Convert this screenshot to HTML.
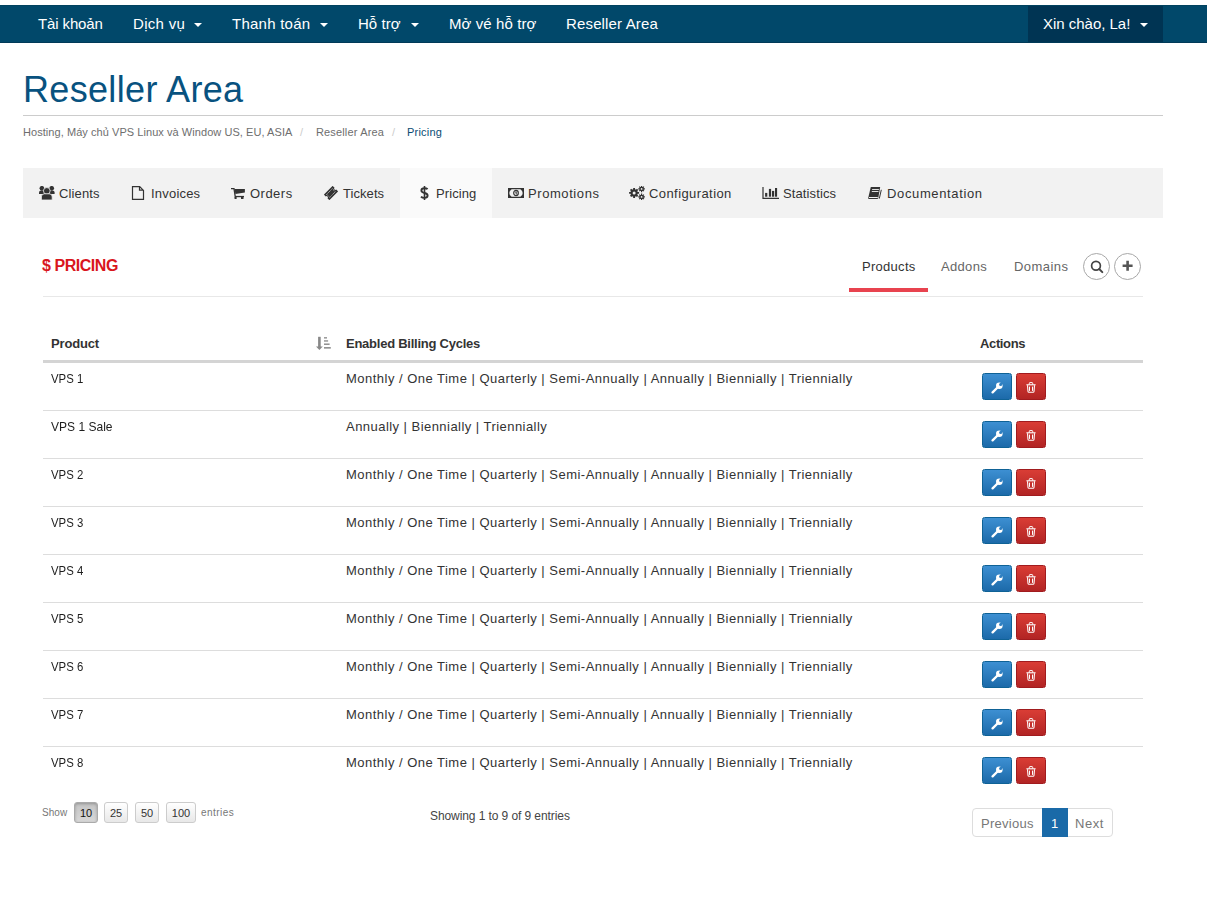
<!DOCTYPE html>
<html><head><meta charset="utf-8">
<style>
*{box-sizing:border-box;margin:0;padding:0}
html,body{width:1207px;height:901px;overflow:hidden;background:#fff;font-family:"Liberation Sans",sans-serif;color:#333}
.a{position:absolute;white-space:nowrap}
#nav{position:absolute;left:0;top:5px;width:1207px;height:38px;background:#01486a;border-top:1px solid #01425f;border-bottom:1px solid #013a58}
.nv{font-size:15px;line-height:18px;color:#fff}
.caret{position:absolute;top:17px;width:0;height:0;border-left:4px solid transparent;border-right:4px solid transparent;border-top:4px solid #fff}
#user{position:absolute;left:1028px;top:0;width:135px;height:36px;background:#003453}
.h1{font-size:36px;color:#08527f;line-height:42px}
.bc{font-size:11px;color:#6e6e6e;line-height:14px}
#tabs{position:absolute;left:23px;top:168px;width:1140px;height:50px;background:#f2f2f2}
.act{position:absolute;left:400px;top:168px;width:92px;height:50px;background:#fafafa}
.tt{font-size:13px;line-height:16px;color:#333}
.ti{position:absolute;line-height:0}
.ph{font-size:16px;font-weight:bold;color:#d9161d;line-height:20px}
.pn{font-size:13px;line-height:16px;color:#666}
.circ{position:absolute;top:253px;width:27px;height:27px;border:1px solid #a8a8a8;border-radius:50%;background:#fff}
.th{font-size:13px;font-weight:bold;line-height:16px;color:#333}
.td{font-size:13px;line-height:16px;color:#333}
.ln{position:absolute;left:43px;width:1100px;height:1px;background:#ddd}
.b1,.b2{position:absolute;width:30px;height:27px;border-radius:2.5px;display:flex;align-items:center;justify-content:center}
.b1{left:982px;background:linear-gradient(#3d8fd2,#1c6aa9);border:1px solid #0f6296}
.b2{left:1016px;background:linear-gradient(#d93d35,#b22424);border:1px solid #a11b1e}
.ft{font-size:10px;color:#777;line-height:14px}
.lb{position:absolute;top:802px;height:21px;border:1px solid #ccc;border-radius:3px;background:linear-gradient(#fff,#e8e8e8);font-size:11px;line-height:20px;text-align:center;color:#333}
.pg{position:absolute;top:808px;height:29px;border:1px solid #ddd;background:#fff}
.pt{font-size:13px;line-height:16px;color:#777}
</style></head><body>
<svg width="0" height="0" style="position:absolute"><defs><mask id="wm" maskUnits="userSpaceOnUse" x="0" y="0" width="13" height="13"><rect width="13" height="13" fill="#fff"/><circle cx="9.6" cy="3.4" r="1.5" fill="#000"/><path d="M9.6 3.4 L13.5 -0.5" stroke="#000" stroke-width="2.3"/></mask></defs></svg>
<div id="nav"><div id="user"></div>
<div class="caret" style="left:194px"></div>
<div class="caret" style="left:320px"></div>
<div class="caret" style="left:411px"></div>
<div class="caret" style="left:1140px"></div>
</div>

<div id="t_n1" class="a nv" style="left:38px;top:15px;letter-spacing:-0.125px;">Tài khoản</div>
<div id="t_n2" class="a nv" style="left:133px;top:15px;letter-spacing:0.300px;">Dịch vụ</div>
<div id="t_n3" class="a nv" style="left:232px;top:15px;letter-spacing:0.245px;">Thanh toán</div>
<div id="t_n4" class="a nv" style="left:358px;top:15px;letter-spacing:0.040px;">Hỗ trợ</div>
<div id="t_n5" class="a nv" style="left:449px;top:15px;letter-spacing:0.090px;">Mở vé hỗ trợ</div>
<div id="t_n6" class="a nv" style="left:566px;top:15px;letter-spacing:0.151px;">Reseller Area</div>
<div id="t_n7" class="a nv" style="left:1043px;top:15px;letter-spacing:-0.017px;">Xin chào, La!</div>
<div id="t_h1" class="a h1" style="left:23px;top:69px;letter-spacing:0.333px;">Reseller Area</div>
<div class="a" style="left:23px;top:115px;width:1140px;height:1px;background:#ccc"></div>
<div id="t_b1" class="a bc" style="left:23px;top:125px;letter-spacing:0.058px;">Hosting, Máy chủ VPS Linux và Window US, EU, ASIA</div>
<div id="t_b2" class="a bc" style="left:300px;top:125px;letter-spacing:0.000px;color:#ccc">/</div>
<div id="t_b3" class="a bc" style="left:316px;top:125px;letter-spacing:0.150px;">Reseller Area</div>
<div id="t_b4" class="a bc" style="left:392px;top:125px;letter-spacing:0.000px;color:#ccc">/</div>
<div id="t_b5" class="a bc" style="left:407px;top:125px;letter-spacing:0.201px;color:#0a4c73">Pricing</div>
<div id="tabs"></div><div class="act"></div>
<div class="ti" style="left:39px;top:186px"><svg width="16" height="14" viewBox="0 0 16 14"><circle cx="2.9" cy="2.3" r="2.35" fill="#333"/><circle cx="12.7" cy="2.3" r="2.35" fill="#333"/><path d="M0 7.9 V6.6 Q0 4.5 2.2 4.5 H5 V7.9Z" fill="#333"/><path d="M15.6 7.9 V6.6 Q15.6 4.5 13.4 4.5 H10.6 V7.9Z" fill="#333"/><circle cx="7.8" cy="4.9" r="3.35" fill="#333" stroke="#f2f2f2" stroke-width="0.8"/><path d="M2.4 14 V10.9 Q2.4 7.8 5.4 7.8 H10.2 Q13.2 7.8 13.2 10.9 V14Z" fill="#333" stroke="#f2f2f2" stroke-width="0.8"/></svg></div>
<div id="t_tc" class="a tt" style="left:59px;top:186px;letter-spacing:0.132px;">Clients</div>
<div class="ti" style="left:131px;top:186px"><svg width="14" height="14" viewBox="0 0 14 14"><path d="M1.5 0.6 H8.7 L12.5 4.4 V13.4 H1.5Z M8.5 0.6 V4.1 H12.5" fill="none" stroke="#333" stroke-width="1.2" stroke-linejoin="miter"/></svg></div>
<div id="t_ti" class="a tt" style="left:151px;top:186px;letter-spacing:0.201px;">Invoices</div>
<div class="ti" style="left:231px;top:188px"><svg width="15" height="12" viewBox="0 0 15 12"><path d="M0 0.6 H3 L4.5 10.4" fill="none" stroke="#333" stroke-width="1.3"/><path d="M3.4 0.9 H13.9 V4.6 L4.4 6Z" fill="#333"/><rect x="4" y="7.9" width="9" height="1.3" fill="#333"/><rect x="3.6" y="9" width="2" height="2" fill="#333"/><rect x="10" y="9" width="2.5" height="2" fill="#333"/></svg></div>
<div id="t_to" class="a tt" style="left:250px;top:186px;letter-spacing:0.480px;">Orders</div>
<div class="ti" style="left:324px;top:186px"><svg width="14" height="14" viewBox="0 0 14 14"><g transform="rotate(-45 7 7)"><path d="M0.8 3.1 H13.2 V5.8 A1.2 1.2 0 0 0 13.2 8.2 V10.9 H0.8 V8.2 A1.2 1.2 0 0 0 0.8 5.8Z" fill="#333"/><rect x="3" y="4.9" width="8" height="4.2" fill="none" stroke="#f2f2f2" stroke-width="0.7" stroke-dasharray="1.1 0.7"/></g></svg></div>
<div id="t_tk" class="a tt" style="left:343px;top:186px;letter-spacing:0.068px;">Tickets</div>
<div class="ti" style="left:420px;top:186px"><svg width="9" height="14" viewBox="0 0 9 14"><path d="M4.5 0 V14" stroke="#333" stroke-width="1.6"/><path d="M7.6 3.2 Q6.6 2.2 4.5 2.2 Q1.4 2.2 1.4 4.5 Q1.4 6.2 4.5 7 Q7.6 7.8 7.6 9.6 Q7.6 11.9 4.5 11.9 Q2.2 11.9 1 10.6" fill="none" stroke="#333" stroke-width="1.9"/></svg></div>
<div id="t_tp" class="a tt" style="left:436px;top:186px;letter-spacing:0.100px;">Pricing</div>
<div class="ti" style="left:508px;top:188px"><svg width="16" height="10" viewBox="0 0 16 10"><rect x="0" y="0" width="16" height="10" fill="#333"/><path d="M3.6 1.2 H12.4 Q14.7 2.6 14.7 5 Q14.7 7.4 12.4 8.8 H3.6 Q1.3 7.4 1.3 5 Q1.3 2.6 3.6 1.2Z" fill="#f2f2f2"/><ellipse cx="8" cy="5" rx="2.3" ry="2.7" fill="none" stroke="#333" stroke-width="1.2"/><path d="M7.3 4.2 L8.2 3.6 V6.5" stroke="#333" stroke-width="1" fill="none"/></svg></div>
<div id="t_tm" class="a tt" style="left:528px;top:186px;letter-spacing:0.578px;">Promotions</div>
<div class="ti" style="left:629px;top:186px"><svg width="16" height="14" viewBox="0 0 16 14"><g fill="#333"><circle cx="5.1" cy="6.9" r="3.6"/><g stroke="#333" stroke-width="1.9"><path d="M5.1 1.9V11.9M0.1 6.9H10.1M1.6 3.4L8.6 10.4M8.6 3.4L1.6 10.4"/></g><circle cx="5.1" cy="6.9" r="1.5" fill="#f2f2f2"/><circle cx="12.6" cy="2.9" r="2.2"/><g stroke="#333" stroke-width="1.2"><path d="M12.6 -0.4V6.2M9.3 2.9H15.9M10.3 0.6L14.9 5.2M14.9 0.6L10.3 5.2"/></g><circle cx="12.6" cy="2.9" r="0.9" fill="#f2f2f2"/><circle cx="12.6" cy="10.9" r="2.2"/><g stroke="#333" stroke-width="1.2"><path d="M12.6 7.6V14.2M9.3 10.9H15.9M10.3 8.6L14.9 13.2M14.9 8.6L10.3 13.2"/></g><circle cx="12.6" cy="10.9" r="0.9" fill="#f2f2f2"/></g></svg></div>
<div id="t_tg" class="a tt" style="left:649px;top:186px;letter-spacing:0.417px;">Configuration</div>
<div class="ti" style="left:762px;top:187px"><svg width="17" height="12" viewBox="0 0 17 12"><path d="M1 0 V11.4 H17" fill="none" stroke="#333" stroke-width="1.2"/><rect x="3.1" y="5.9" width="2.2" height="3.8" fill="#333"/><rect x="6.9" y="1.9" width="2.2" height="7.8" fill="#333"/><rect x="10" y="3.9" width="2.2" height="5.8" fill="#333"/><rect x="13" y="1" width="2.1" height="8.7" fill="#333"/></svg></div>
<div id="t_ts" class="a tt" style="left:783px;top:186px;letter-spacing:0.112px;">Statistics</div>
<div class="ti" style="left:868px;top:187px"><svg width="14" height="13" viewBox="0 0 14 13"><path d="M2.9 0 H12.2 L10.2 11.2 Q10 12 9.2 12 H1 Q0 12 0.2 11 L2.6 0.8Z" fill="#333"/><path d="M1 10.5 H9.8" stroke="#f2f2f2" stroke-width="1"/><path d="M4.1 2.5 H10.9 M3.8 4.5 H10.5" stroke="#f2f2f2" stroke-width="0.9"/><path d="M13.3 2.8 L11.3 11.6" stroke="#333" stroke-width="1"/></svg></div>
<div id="t_td" class="a tt" style="left:887px;top:186px;letter-spacing:0.633px;">Documentation</div>
<div id="t_ph" class="a ph" style="left:42px;top:256px;letter-spacing:-0.450px;">$ PRICING</div>
<div id="t_p1" class="a pn" style="left:862px;top:259px;letter-spacing:0.286px;color:#333">Products</div>
<div id="t_p2" class="a pn" style="left:941px;top:259px;letter-spacing:0.320px;">Addons</div>
<div id="t_p3" class="a pn" style="left:1014px;top:259px;letter-spacing:0.432px;">Domains</div>
<div class="a" style="left:849px;top:288px;width:79px;height:4px;background:#e8434f"></div>
<div class="a" style="left:43px;top:296px;width:1100px;height:1px;background:#e8e8e8"></div>
<div class="circ" style="left:1083px"><svg width="25" height="25" viewBox="0 0 25 25" style="position:absolute;left:0;top:0"><circle cx="12" cy="11.7" r="4.4" fill="none" stroke="#444" stroke-width="1.7"/><path d="M15.2 15 L18.3 18.1" stroke="#444" stroke-width="2" stroke-linecap="round"/></svg></div>
<div class="circ" style="left:1114px"><svg width="25" height="25" viewBox="0 0 25 25" style="position:absolute;left:0;top:0"><path d="M7.6 11.7 H17.6 M12.6 6.7 V16.7" stroke="#555" stroke-width="2.6"/></svg></div>
<div class="a" style="left:43px;top:360px;width:1100px;height:3px;background:#d4d4d4"></div>
<div id="t_h_p" class="a th" style="left:51px;top:336px;letter-spacing:-0.166px;">Product</div>
<svg class="a" style="left:316px;top:336px" width="16" height="15" viewBox="0 0 16 15"><rect x="2.1" y="0.8" width="2.6" height="10.5" fill="#888"/><path d="M0 10.6 H6.8 L3.4 14Z" fill="#888"/><rect x="8" y="1.2" width="3" height="1.3" fill="#888"/><rect x="8" y="4.3" width="4.1" height="1.3" fill="#888"/><rect x="8" y="7.5" width="5.6" height="1.4" fill="#888"/><rect x="8" y="11.1" width="6.8" height="1.5" fill="#888"/></svg>
<div id="t_h_c" class="a th" style="left:346px;top:336px;letter-spacing:-0.247px;">Enabled Billing Cycles</div>
<div id="t_h_a" class="a th" style="left:980px;top:336px;letter-spacing:-0.366px;">Actions</div>
<div id="t_r1" class="a td" style="left:51px;top:371px;transform:scaleX(0.875);transform-origin:0 0;color:#1e1e1e">VPS 1</div>
<div id="t_cf" class="a td" style="left:346px;top:371px;letter-spacing:0.482px">Monthly / One Time | Quarterly | Semi-Annually | Annually | Biennially | Triennially</div>
<div class="b1" style="top:373px"></div><div class="b2" style="top:373px"></div>
<div class="a" style="left:991px;top:381px;line-height:0"><svg width="13" height="13" viewBox="0 0 13 13"><g mask="url(#wm)"><circle cx="8.3" cy="4.7" r="3.3" fill="#fff"/><path d="M1.6 11.4 L7 6" stroke="#fff" stroke-width="2.3" stroke-linecap="round"/></g></svg></div><div class="a" style="left:1026px;top:382px;line-height:0"><svg width="10" height="11" viewBox="0 0 10 11"><path d="M0.4 2.8 H9.6" stroke="#fff" stroke-width="1.1"/><path d="M3.3 2.6 V1.3 Q3.3 0.6 4 0.6 H6 Q6.7 0.6 6.7 1.3 V2.6" fill="none" stroke="#fff" stroke-width="1"/><path d="M1.5 3.2 L2 9.5 Q2.1 10.3 2.9 10.3 H7.1 Q7.9 10.3 8 9.5 L8.5 3.2" fill="none" stroke="#fff" stroke-width="1.1"/><path d="M3.5 4.6 V8.9 M6.5 4.6 V8.9" stroke="#fff" stroke-width="1"/></svg></div>
<div class="ln" style="top:410px"></div>
<div id="t_rs" class="a td" style="left:51px;top:419px;transform:scaleX(0.925);transform-origin:0 0;color:#1e1e1e">VPS 1 Sale</div>
<div id="t_cs" class="a td" style="left:346px;top:419px;letter-spacing:0.458px">Annually | Biennially | Triennially</div>
<div class="b1" style="top:421px"></div><div class="b2" style="top:421px"></div>
<div class="a" style="left:991px;top:429px;line-height:0"><svg width="13" height="13" viewBox="0 0 13 13"><g mask="url(#wm)"><circle cx="8.3" cy="4.7" r="3.3" fill="#fff"/><path d="M1.6 11.4 L7 6" stroke="#fff" stroke-width="2.3" stroke-linecap="round"/></g></svg></div><div class="a" style="left:1026px;top:430px;line-height:0"><svg width="10" height="11" viewBox="0 0 10 11"><path d="M0.4 2.8 H9.6" stroke="#fff" stroke-width="1.1"/><path d="M3.3 2.6 V1.3 Q3.3 0.6 4 0.6 H6 Q6.7 0.6 6.7 1.3 V2.6" fill="none" stroke="#fff" stroke-width="1"/><path d="M1.5 3.2 L2 9.5 Q2.1 10.3 2.9 10.3 H7.1 Q7.9 10.3 8 9.5 L8.5 3.2" fill="none" stroke="#fff" stroke-width="1.1"/><path d="M3.5 4.6 V8.9 M6.5 4.6 V8.9" stroke="#fff" stroke-width="1"/></svg></div>
<div class="ln" style="top:458px"></div>
<div id="t_r2" class="a td" style="left:51px;top:467px;transform:scaleX(0.875);transform-origin:0 0;color:#1e1e1e">VPS 2</div>
<div id="t_c2" class="a td" style="left:346px;top:467px;letter-spacing:0.482px">Monthly / One Time | Quarterly | Semi-Annually | Annually | Biennially | Triennially</div>
<div class="b1" style="top:469px"></div><div class="b2" style="top:469px"></div>
<div class="a" style="left:991px;top:477px;line-height:0"><svg width="13" height="13" viewBox="0 0 13 13"><g mask="url(#wm)"><circle cx="8.3" cy="4.7" r="3.3" fill="#fff"/><path d="M1.6 11.4 L7 6" stroke="#fff" stroke-width="2.3" stroke-linecap="round"/></g></svg></div><div class="a" style="left:1026px;top:478px;line-height:0"><svg width="10" height="11" viewBox="0 0 10 11"><path d="M0.4 2.8 H9.6" stroke="#fff" stroke-width="1.1"/><path d="M3.3 2.6 V1.3 Q3.3 0.6 4 0.6 H6 Q6.7 0.6 6.7 1.3 V2.6" fill="none" stroke="#fff" stroke-width="1"/><path d="M1.5 3.2 L2 9.5 Q2.1 10.3 2.9 10.3 H7.1 Q7.9 10.3 8 9.5 L8.5 3.2" fill="none" stroke="#fff" stroke-width="1.1"/><path d="M3.5 4.6 V8.9 M6.5 4.6 V8.9" stroke="#fff" stroke-width="1"/></svg></div>
<div class="ln" style="top:506px"></div>
<div id="t_r3" class="a td" style="left:51px;top:515px;transform:scaleX(0.875);transform-origin:0 0;color:#1e1e1e">VPS 3</div>
<div id="t_c3" class="a td" style="left:346px;top:515px;letter-spacing:0.482px">Monthly / One Time | Quarterly | Semi-Annually | Annually | Biennially | Triennially</div>
<div class="b1" style="top:517px"></div><div class="b2" style="top:517px"></div>
<div class="a" style="left:991px;top:525px;line-height:0"><svg width="13" height="13" viewBox="0 0 13 13"><g mask="url(#wm)"><circle cx="8.3" cy="4.7" r="3.3" fill="#fff"/><path d="M1.6 11.4 L7 6" stroke="#fff" stroke-width="2.3" stroke-linecap="round"/></g></svg></div><div class="a" style="left:1026px;top:526px;line-height:0"><svg width="10" height="11" viewBox="0 0 10 11"><path d="M0.4 2.8 H9.6" stroke="#fff" stroke-width="1.1"/><path d="M3.3 2.6 V1.3 Q3.3 0.6 4 0.6 H6 Q6.7 0.6 6.7 1.3 V2.6" fill="none" stroke="#fff" stroke-width="1"/><path d="M1.5 3.2 L2 9.5 Q2.1 10.3 2.9 10.3 H7.1 Q7.9 10.3 8 9.5 L8.5 3.2" fill="none" stroke="#fff" stroke-width="1.1"/><path d="M3.5 4.6 V8.9 M6.5 4.6 V8.9" stroke="#fff" stroke-width="1"/></svg></div>
<div class="ln" style="top:554px"></div>
<div id="t_r4" class="a td" style="left:51px;top:563px;transform:scaleX(0.875);transform-origin:0 0;color:#1e1e1e">VPS 4</div>
<div id="t_c4" class="a td" style="left:346px;top:563px;letter-spacing:0.482px">Monthly / One Time | Quarterly | Semi-Annually | Annually | Biennially | Triennially</div>
<div class="b1" style="top:565px"></div><div class="b2" style="top:565px"></div>
<div class="a" style="left:991px;top:573px;line-height:0"><svg width="13" height="13" viewBox="0 0 13 13"><g mask="url(#wm)"><circle cx="8.3" cy="4.7" r="3.3" fill="#fff"/><path d="M1.6 11.4 L7 6" stroke="#fff" stroke-width="2.3" stroke-linecap="round"/></g></svg></div><div class="a" style="left:1026px;top:574px;line-height:0"><svg width="10" height="11" viewBox="0 0 10 11"><path d="M0.4 2.8 H9.6" stroke="#fff" stroke-width="1.1"/><path d="M3.3 2.6 V1.3 Q3.3 0.6 4 0.6 H6 Q6.7 0.6 6.7 1.3 V2.6" fill="none" stroke="#fff" stroke-width="1"/><path d="M1.5 3.2 L2 9.5 Q2.1 10.3 2.9 10.3 H7.1 Q7.9 10.3 8 9.5 L8.5 3.2" fill="none" stroke="#fff" stroke-width="1.1"/><path d="M3.5 4.6 V8.9 M6.5 4.6 V8.9" stroke="#fff" stroke-width="1"/></svg></div>
<div class="ln" style="top:602px"></div>
<div id="t_r5" class="a td" style="left:51px;top:611px;transform:scaleX(0.875);transform-origin:0 0;color:#1e1e1e">VPS 5</div>
<div id="t_c5" class="a td" style="left:346px;top:611px;letter-spacing:0.482px">Monthly / One Time | Quarterly | Semi-Annually | Annually | Biennially | Triennially</div>
<div class="b1" style="top:613px"></div><div class="b2" style="top:613px"></div>
<div class="a" style="left:991px;top:621px;line-height:0"><svg width="13" height="13" viewBox="0 0 13 13"><g mask="url(#wm)"><circle cx="8.3" cy="4.7" r="3.3" fill="#fff"/><path d="M1.6 11.4 L7 6" stroke="#fff" stroke-width="2.3" stroke-linecap="round"/></g></svg></div><div class="a" style="left:1026px;top:622px;line-height:0"><svg width="10" height="11" viewBox="0 0 10 11"><path d="M0.4 2.8 H9.6" stroke="#fff" stroke-width="1.1"/><path d="M3.3 2.6 V1.3 Q3.3 0.6 4 0.6 H6 Q6.7 0.6 6.7 1.3 V2.6" fill="none" stroke="#fff" stroke-width="1"/><path d="M1.5 3.2 L2 9.5 Q2.1 10.3 2.9 10.3 H7.1 Q7.9 10.3 8 9.5 L8.5 3.2" fill="none" stroke="#fff" stroke-width="1.1"/><path d="M3.5 4.6 V8.9 M6.5 4.6 V8.9" stroke="#fff" stroke-width="1"/></svg></div>
<div class="ln" style="top:650px"></div>
<div id="t_r6" class="a td" style="left:51px;top:659px;transform:scaleX(0.875);transform-origin:0 0;color:#1e1e1e">VPS 6</div>
<div id="t_c6" class="a td" style="left:346px;top:659px;letter-spacing:0.482px">Monthly / One Time | Quarterly | Semi-Annually | Annually | Biennially | Triennially</div>
<div class="b1" style="top:661px"></div><div class="b2" style="top:661px"></div>
<div class="a" style="left:991px;top:669px;line-height:0"><svg width="13" height="13" viewBox="0 0 13 13"><g mask="url(#wm)"><circle cx="8.3" cy="4.7" r="3.3" fill="#fff"/><path d="M1.6 11.4 L7 6" stroke="#fff" stroke-width="2.3" stroke-linecap="round"/></g></svg></div><div class="a" style="left:1026px;top:670px;line-height:0"><svg width="10" height="11" viewBox="0 0 10 11"><path d="M0.4 2.8 H9.6" stroke="#fff" stroke-width="1.1"/><path d="M3.3 2.6 V1.3 Q3.3 0.6 4 0.6 H6 Q6.7 0.6 6.7 1.3 V2.6" fill="none" stroke="#fff" stroke-width="1"/><path d="M1.5 3.2 L2 9.5 Q2.1 10.3 2.9 10.3 H7.1 Q7.9 10.3 8 9.5 L8.5 3.2" fill="none" stroke="#fff" stroke-width="1.1"/><path d="M3.5 4.6 V8.9 M6.5 4.6 V8.9" stroke="#fff" stroke-width="1"/></svg></div>
<div class="ln" style="top:698px"></div>
<div id="t_r7" class="a td" style="left:51px;top:707px;transform:scaleX(0.875);transform-origin:0 0;color:#1e1e1e">VPS 7</div>
<div id="t_c7" class="a td" style="left:346px;top:707px;letter-spacing:0.482px">Monthly / One Time | Quarterly | Semi-Annually | Annually | Biennially | Triennially</div>
<div class="b1" style="top:709px"></div><div class="b2" style="top:709px"></div>
<div class="a" style="left:991px;top:717px;line-height:0"><svg width="13" height="13" viewBox="0 0 13 13"><g mask="url(#wm)"><circle cx="8.3" cy="4.7" r="3.3" fill="#fff"/><path d="M1.6 11.4 L7 6" stroke="#fff" stroke-width="2.3" stroke-linecap="round"/></g></svg></div><div class="a" style="left:1026px;top:718px;line-height:0"><svg width="10" height="11" viewBox="0 0 10 11"><path d="M0.4 2.8 H9.6" stroke="#fff" stroke-width="1.1"/><path d="M3.3 2.6 V1.3 Q3.3 0.6 4 0.6 H6 Q6.7 0.6 6.7 1.3 V2.6" fill="none" stroke="#fff" stroke-width="1"/><path d="M1.5 3.2 L2 9.5 Q2.1 10.3 2.9 10.3 H7.1 Q7.9 10.3 8 9.5 L8.5 3.2" fill="none" stroke="#fff" stroke-width="1.1"/><path d="M3.5 4.6 V8.9 M6.5 4.6 V8.9" stroke="#fff" stroke-width="1"/></svg></div>
<div class="ln" style="top:746px"></div>
<div id="t_r8" class="a td" style="left:51px;top:755px;transform:scaleX(0.875);transform-origin:0 0;color:#1e1e1e">VPS 8</div>
<div id="t_c8" class="a td" style="left:346px;top:755px;letter-spacing:0.482px">Monthly / One Time | Quarterly | Semi-Annually | Annually | Biennially | Triennially</div>
<div class="b1" style="top:757px"></div><div class="b2" style="top:757px"></div>
<div class="a" style="left:991px;top:765px;line-height:0"><svg width="13" height="13" viewBox="0 0 13 13"><g mask="url(#wm)"><circle cx="8.3" cy="4.7" r="3.3" fill="#fff"/><path d="M1.6 11.4 L7 6" stroke="#fff" stroke-width="2.3" stroke-linecap="round"/></g></svg></div><div class="a" style="left:1026px;top:766px;line-height:0"><svg width="10" height="11" viewBox="0 0 10 11"><path d="M0.4 2.8 H9.6" stroke="#fff" stroke-width="1.1"/><path d="M3.3 2.6 V1.3 Q3.3 0.6 4 0.6 H6 Q6.7 0.6 6.7 1.3 V2.6" fill="none" stroke="#fff" stroke-width="1"/><path d="M1.5 3.2 L2 9.5 Q2.1 10.3 2.9 10.3 H7.1 Q7.9 10.3 8 9.5 L8.5 3.2" fill="none" stroke="#fff" stroke-width="1.1"/><path d="M3.5 4.6 V8.9 M6.5 4.6 V8.9" stroke="#fff" stroke-width="1"/></svg></div>
<div id="t_f1" class="a ft" style="left:42px;top:806px;letter-spacing:0.067px;">Show</div>
<div class="lb" style="left:74px;width:24px;background:linear-gradient(#c4c4c4,#d8d8d8);border-color:#aaa;box-shadow:inset 0 1px 3px rgba(0,0,0,.25);color:#111">10</div>
<div class="lb" style="left:104px;width:24px">25</div>
<div class="lb" style="left:135px;width:24px">50</div>
<div class="lb" style="left:166px;width:30px">100</div>
<div id="t_f2" class="a ft" style="left:201px;top:806px;letter-spacing:0.466px;">entries</div>
<div id="t_f3" class="a ft" style="left:430px;top:809px;letter-spacing:-0.085px;font-size:12px;color:#444">Showing 1 to 9 of 9 entries</div>
<div class="pg" style="left:972px;width:71px;border-radius:4px 0 0 4px"></div>
<div class="pg" style="left:1067px;width:46px;border-radius:0 4px 4px 0"></div>
<div class="pg" style="left:1042px;width:26px;background:#1a6aa8;border-color:#1a6aa8"></div>
<div id="t_g1" class="a pt" style="left:981px;top:816px;letter-spacing:0.286px;">Previous</div>
<div class="a pt" style="left:1051px;top:816px;color:#fff">1</div>
<div id="t_g2" class="a pt" style="left:1075px;top:816px;letter-spacing:0.533px;">Next</div>
</body></html>
